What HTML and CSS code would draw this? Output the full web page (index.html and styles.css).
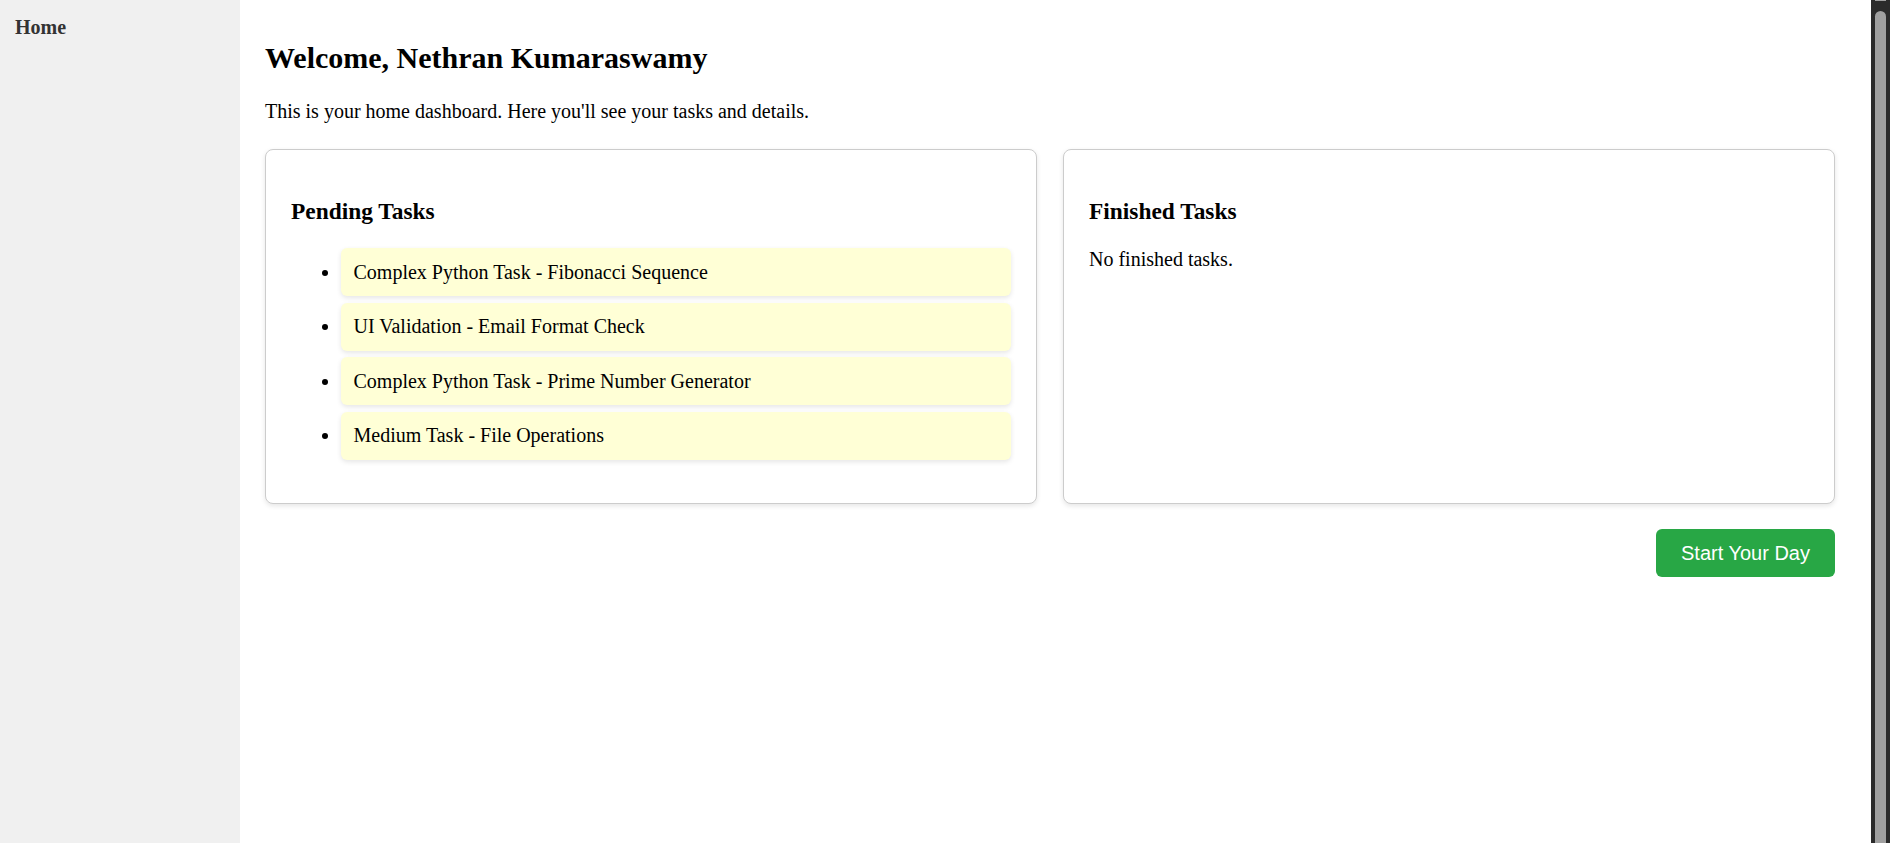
FILE: index.html
```html
<!DOCTYPE html>
<html lang="en">
<head>
<meta charset="utf-8">
<title>Home</title>
<link rel="stylesheet" href="styles.css">
</head>
<body>
<div class="layout">
  <aside class="sidebar">
    <a class="nav-link" href="#">Home</a>
  </aside>
  <main class="main">
    <h2 class="title">Welcome, Nethran Kumaraswamy</h2>
    <p class="intro">This is your home dashboard. Here you'll see your tasks and details.</p>
    <div class="cards">
      <section class="card">
        <h3 class="card-title">Pending Tasks</h3>
        <ul class="task-list">
          <li class="task">Complex Python Task - Fibonacci Sequence</li>
          <li class="task">UI Validation - Email Format Check</li>
          <li class="task">Complex Python Task - Prime Number Generator</li>
          <li class="task">Medium Task - File Operations</li>
        </ul>
      </section>
      <section class="card">
        <h3 class="card-title">Finished Tasks</h3>
        <p class="empty">No finished tasks.</p>
      </section>
    </div>
    <div class="actions">
      <button class="start-btn" type="button">Start Your Day</button>
    </div>
  </main>
  <div class="scrollbar" aria-hidden="true">
    <div class="scroll-cap"></div>
    <div class="scroll-thumb"></div>
  </div>
</div>
</body>
</html>
```
FILE: styles.css
```css
html, body {
  margin: 0;
  padding: 0;
}

body {
  font-family: "Liberation Serif", "Times New Roman", serif;
  font-size: 20px;
  color: #000;
  background: #fff;
  overflow: hidden;
}

.layout {
  display: flex;
  height: 100vh;
}

.sidebar {
  flex: none;
  width: 240px;
  box-sizing: border-box;
  background: #f0f0f0;
  padding: 16px 15px;
}

.nav-link {
  display: block;
  font-weight: bold;
  color: #333;
  text-decoration: none;
}

.main {
  flex: 1;
  min-width: 0;
  padding: 16px 36px 16px 25px;
}

.title {
  font-size: 30px;
  font-weight: bold;
  margin: 25px 0;
}

.intro {
  margin: 0;
}

.cards {
  display: grid;
  grid-template-columns: 1fr 1fr;
  gap: 26px;
  margin-top: 26px;
}

.card {
  border: 1px solid #ccc;
  border-radius: 8px;
  padding: 25px;
  background: #fff;
  box-shadow: 0 2px 5px rgba(0, 0, 0, 0.1);
}

.card-title {
  font-size: 23.4px;
  font-weight: bold;
  margin: 22.5px 0 23.8px;
}

.task-list {
  margin: 0 0 18.5px;
  padding-left: 50px;
}

.task {
  background: #ffffd6;
  padding: 12.6px 12.5px;
  margin-bottom: 6.25px;
  border-radius: 6px;
  box-shadow: 0 2px 5px rgba(0, 0, 0, 0.1);
}

.empty {
  margin: 0;
}

.actions {
  display: flex;
  justify-content: flex-end;
  margin-top: 25px;
}

.start-btn {
  background: #28a745;
  color: #fff;
  border: none;
  border-radius: 6px;
  padding: 12.5px 25px;
  font-family: "Liberation Sans", Arial, sans-serif;
  font-size: 20px;
  line-height: 23px;
  cursor: pointer;
}

.scrollbar {
  flex: none;
  width: 19px;
  box-sizing: border-box;
  padding: 0 4px;
  background: #2b2b2b;
  display: flex;
  flex-direction: column;
}

.scroll-cap {
  height: 1px;
  background: #a0a0a0;
}

.scroll-thumb {
  flex: 1;
  margin-top: 10px;
  background: #a0a0a0;
  border-radius: 6px 6px 0 0;
}
```
